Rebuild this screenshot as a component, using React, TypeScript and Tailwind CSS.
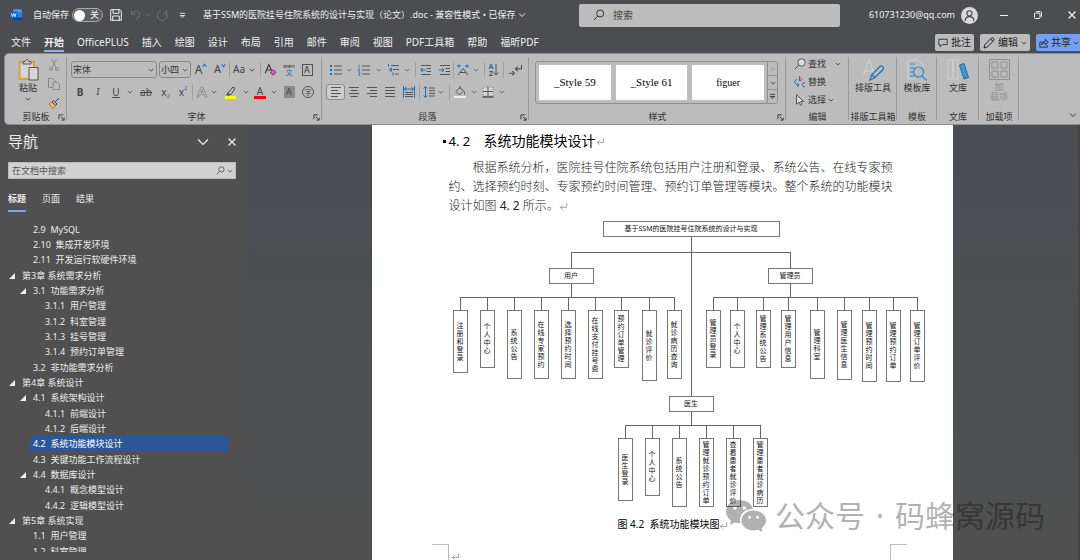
import type { ReactNode } from "react";

type IconProps = { children: ReactNode; className?: string; box?: string };

function Icon({ children, className = "size-3", box = "0 0 12 12" }: IconProps) {
  return (
    <svg viewBox={box} className={`shrink-0 ${className}`} fill="none" stroke="currentColor" strokeWidth="1" aria-hidden="true">
      {children}
    </svg>
  );
}

function Chevron({ className = "size-[6px]" }: { className?: string }) {
  return (
    <Icon box="0 0 8 8" className={className}>
      <path d="M1 2.5 4 5.5 7 2.5" />
    </Icon>
  );
}

function Tool({ label, className = "w-[18px]", children }: { label: string; className?: string; children: ReactNode }) {
  return (
    <button type="button" aria-label={label} className={`flex h-4 shrink-0 items-center justify-center ${className}`}>
      {children}
    </button>
  );
}

function Drop({ label, className = "w-2" }: { label: string; className?: string }) {
  return (
    <Tool label={label} className={className}>
      <Chevron />
    </Tool>
  );
}

function Divider({ className = "" }: { className?: string }) {
  return <span className={`h-4 w-px shrink-0 bg-[#a0a0a0] ${className}`} />;
}

function Launcher() {
  return (
    <button type="button" aria-label="更多选项" className="absolute right-[2px] bottom-[3px]">
      <Icon className="size-[7px]" box="0 0 8 8">
        <path d="M1 6V1h5M3 3l4 4M7 4v3H4" />
      </Icon>
    </button>
  );
}

function Group({ title, className, children, launcher }: { title: string; className: string; children: ReactNode; launcher?: boolean }) {
  return (
    <section aria-label={title} className={`relative flex shrink-0 flex-col ${className}`}>
      <div className="flex-1">{children}</div>
      <h2 className="h-[13px] text-center text-[9px] leading-3 whitespace-nowrap">{title}</h2>
      {launcher && <Launcher />}
      <span className="absolute top-[3px] right-0 bottom-1 w-px bg-[#999]" />
    </section>
  );
}

function BigTool({ label, icon, muted }: { label: string; icon: ReactNode; muted?: boolean }) {
  return (
    <button
      type="button"
      disabled={muted}
      className={`flex w-full flex-col items-center gap-[2px] pt-[5px] text-[9px] leading-[10px] whitespace-pre-line ${muted ? "text-[#909090]" : ""}`}
    >
      {icon}
      <span>{label}</span>
    </button>
  );
}

function TitleBar() {
  return (
    <div className="grid h-[30px] grid-cols-[579fr_261fr_240fr] items-center text-[9px] text-[#f0f0f0]">
      <div className="flex items-center pl-[10px] whitespace-nowrap">
        <svg viewBox="0 0 24 24" className="size-3" aria-label="Word">
          <rect x="6" y="1" width="18" height="22" rx="2" fill="#2b7cd3" />
          <rect x="6" y="1" width="18" height="6" rx="2" fill="#41a5ee" />
          <rect x="6" y="17" width="18" height="6" rx="1" fill="#103f91" />
          <rect y="5" width="15" height="14" rx="1.5" fill="#185abd" />
          <path d="M3 8.5 5 15.5 7.5 9 10 15.5 12 8.5" fill="none" stroke="#fff" strokeWidth="1.7" />
        </svg>
        <label htmlFor="autosave" className="ml-[11px] w-[36px]">自动保存</label>
        <span className="relative ml-[3px] flex h-[14px] w-[31px] items-center rounded-full border border-[#aaa] bg-[#5d5d5f]">
          <input id="autosave" type="checkbox" role="switch" className="absolute inset-0 appearance-none" />
          <span className="ml-px size-[11px] rounded-full bg-white" />
          <span className="ml-[5px]">关</span>
        </span>
        <button type="button" aria-label="保存" className="ml-[7px]">
          <Icon className="size-[12px]">
            <path d="M.7.7h9.3l1.3 1.3v9.3H.7zM3 .7v3.6h6V.7M2.7 11.3V7h6.6v4.3" />
          </Icon>
        </button>
        <button type="button" aria-label="撤消" className="ml-2 text-[#727477]">
          <Icon><path d="M1.5 1v4h4M1.7 4.8C4 1.5 9.5 1.5 9.8 5c0 2.5-2 3.5-4.5 6" /></Icon>
        </button>
        <span className="ml-[3px] text-[#727477]"><Chevron /></span>
        <button type="button" aria-label="重复" className="ml-[6px] text-[#727477]">
          <Icon><path d="M9.5 1v3.2H6.5M9.5 4A5 5 0 1 1 4 1.7" /></Icon>
        </button>
        <button type="button" aria-label="自定义快速访问工具栏" className="ml-[10px]">
          <Icon box="0 0 8 8" className="size-[7px]"><path d="M1 1.5h6M1.5 4 4 6.5 6.5 4z" /></Icon>
        </button>
        <h1 className="ml-[17px]">基于SSM的医院挂号住院系统的设计与实现（论文）.doc - 兼容性模式 • 已保存</h1>
        <span className="ml-[3px]"><Chevron className="size-2" /></span>
      </div>
      <label className="flex h-[23px] items-center rounded-[2px] bg-[#bcbcbc] pl-[14px] text-[#333]">
        <Icon className="size-[12px]"><circle cx="7.2" cy="4.5" r="3.5" /><path d="M4.7 7.2 1 11" /></Icon>
        <input aria-label="搜索" placeholder="搜索" className="ml-2 w-full bg-transparent text-[10px] placeholder:text-[#444] focus:outline-none" />
      </label>
      <div className="flex items-center justify-end pr-1">
        <span className="whitespace-nowrap">610731230@qq.com</span>
        <span className="ml-[6px] flex size-[17px] items-center justify-center rounded-full bg-[#d8d8d8] text-[#444]">
          <Icon className="size-[13px]"><circle cx="6" cy="4" r="2.4" /><path d="M2 11c0-5.3 8-5.3 8 0" /></Icon>
        </span>
        <button type="button" aria-label="最小化" className="ml-[22px]">
          <Icon className="size-2" box="0 0 8 8"><path d="M0 4.5h8" /></Icon>
        </button>
        <button type="button" aria-label="还原" className="ml-[26px]">
          <Icon className="size-2" box="0 0 8 8"><rect x=".5" y="2" width="5.5" height="5.5" rx="1" /><path d="M2.2.6H6c1 0 1.5.5 1.5 1.5v3.7" /></Icon>
        </button>
        <button type="button" aria-label="关闭" className="ml-[26px]">
          <Icon className="size-2" box="0 0 8 8"><path d="m.5.5 7 7m0-7-7 7" strokeWidth="1.2" /></Icon>
        </button>
      </div>
    </div>
  );
}

const tabs = ["文件", "开始", "OfficePLUS", "插入", "绘图", "设计", "布局", "引用", "邮件", "审阅", "视图", "PDF工具箱", "帮助", "福昕PDF"];

function TabBar() {
  return (
    <div className="flex h-[23px] items-start justify-between text-[10px] text-[#f0f0f0]">
      <nav aria-label="功能区" className="flex gap-x-[13px] pt-[5px] pl-[11px] leading-[14px] whitespace-nowrap">
        {tabs.map((t) =>
          t === "开始" ? (
            <a key={t} href="#home" aria-current="page" className="h-[17px] border-b-2 border-[#8fb0ea] font-bold">{t}</a>
          ) : (
            <a key={t} href="#tab">{t}</a>
          ),
        )}
      </nav>
      <div className="flex gap-[6px] pt-1 text-[#222]">
        <button type="button" className="flex h-[17px] items-center gap-[3px] rounded-[2px] bg-[#bcbcbc] px-[3px] whitespace-nowrap">
          <Icon className="size-[10px]"><path d="M1 1.5h10v6.5H5l-2.5 2.5V8H1z" /></Icon>批注
        </button>
        <button type="button" className="flex h-[17px] items-center gap-[3px] rounded-[2px] bg-[#bcbcbc] px-[3px] whitespace-nowrap">
          <Icon className="size-[12px]"><path d="m1 11 1-3.5L8.5 1c1-.8 3.2 1 2.3 2.3L4.5 10zM7.5 2l2.3 2.3" /></Icon>编辑<Chevron />
        </button>
        <button type="button" className="flex h-[17px] items-center gap-[2px] rounded-l-[2px] bg-[#73a0f4] pr-px pl-[3px] whitespace-nowrap">
          <Icon className="size-[10px]"><path d="M4 5H1v6h9V8.5M3.5 8c0-3 2-4 4-4V1.5L11 5 7.5 8V6c-2 0-3 .5-4 2z" /></Icon>共享<Chevron />
        </button>
      </div>
    </div>
  );
}

function Combo({ label, value, className }: { label: string; value: string; className: string }) {
  return (
    <span className={`relative flex h-[17px] shrink-0 items-center rounded-[3px] border border-[#888] ${className}`}>
      <select aria-label={label} className="h-full w-full appearance-none bg-transparent pl-px text-[9px]">
        <option>{value}</option>
      </select>
      <span className="pointer-events-none absolute right-[2px]"><Chevron /></span>
    </span>
  );
}

function FontGroup() {
  return (
    <Group title="字体" className="w-[255px] pl-1" launcher>
      <div className="flex items-center pt-[7px]">
        <Combo label="字体" value="宋体" className="w-[86px]" />
        <Combo label="字号" value="小四" className="ml-[2px] w-[32px]" />
        <Tool label="增大字号" className="w-5 text-[12px] text-[#444]">A<span className="-mt-2 text-[#1f6fb5]"><Icon box="0 0 8 8" className="size-[5px] rotate-180"><path d="M1 2 4 6 7 2" strokeWidth="1.8" /></Icon></span></Tool>
        <Tool label="减小字号" className="w-[18px] text-[11px] text-[#444]">A<span className="-mt-2 text-[#1f6fb5]"><Icon box="0 0 8 8" className="size-[5px]"><path d="M1 2 4 6 7 2" strokeWidth="1.8" /></Icon></span></Tool>
        <Divider />
        <Tool label="更改大小写" className="w-[18px] text-[10px] text-[#444]">Aa</Tool>
        <Drop label="大小写选项" />
        <Divider className="ml-1" />
        <Tool label="清除格式">
          <Icon className="size-[13px]"><path d="M1 9.5 4.5 1.5 7 7M2.3 6.5h4" /><path d="m6 8.7 2.5-2.5 2.5 2.3L8.5 11z" fill="#c87ab5" stroke="#a5338c" /></Icon>
        </Tool>
        <Tool label="拼音指南" className="w-5">
          <span className="flex flex-col items-center text-[6px] leading-[6px]"><span>wén</span><span className="text-[7px] leading-[7px] text-[#1f6fb5]">文</span></span>
        </Tool>
        <Tool label="字符边框" className="w-4"><span className="flex h-3 w-[11px] items-center justify-center border border-[#555] text-[9px] leading-none">A</span></Tool>
      </div>
      <div className="flex items-center pt-[6px] text-[10px] text-[#444]">
        <Tool label="加粗"><b>B</b></Tool>
        <Tool label="倾斜"><i className="font-serif">I</i></Tool>
        <Tool label="下划线"><u>U</u></Tool>
        <Drop label="下划线选项" className="w-[10px]" />
        <Tool label="删除线" className="w-[22px]"><s>ab</s></Tool>
        <Tool label="下标" className="w-[17px]">x<span className="mt-2 text-[6px] text-[#1f6fb5]">2</span></Tool>
        <Tool label="上标">x<span className="-mt-2 text-[6px] text-[#1f6fb5]">2</span></Tool>
        <Divider />
        <Tool label="文本效果" className="w-[17px] text-[#929292]">
          <Icon><path d="M1 11 5 1h2l4 10H9L8 8.5H4L3 11zM4.8 6.5h2.4L6 3.3z" /></Icon>
        </Tool>
        <Drop label="文本效果选项" />
        <Tool label="突出显示" className="w-6">
          <Icon className="size-[13px]" box="0 0 13 13"><path d="m4 7 5-6 2 1.5L7 8.5H4zM4 7 2.5 9H6" /><path d="M1 11.5h11" stroke="#ffff00" strokeWidth="3" /></Icon>
        </Tool>
        <Drop label="突出显示选项" />
        <Tool label="字体颜色" className="w-5"><span className="h-[13px] w-[12px] border-b-[3px] border-[#ff0000] text-center leading-[10px]">A</span></Tool>
        <Drop label="字体颜色选项" />
        <Tool label="字符底纹" className="w-[22px]"><span className="h-3 w-[11px] bg-[#8b8b8b] text-center text-[9px] leading-3">A</span></Tool>
        <Tool label="带圈字符" className="w-4"><span className="flex size-3 items-center justify-center rounded-full border border-[#555] text-[7px] leading-none">字</span></Tool>
      </div>
    </Group>
  );
}

function ParagraphGroup() {
  return (
    <Group title="段落" className="w-[207px] pl-1" launcher>
      <div className="flex items-center pt-2 text-[#555]">
        <Tool label="项目符号" className="w-[19px]">
          <Icon><path d="M4 2h8M4 6h8M4 10h8" /><path d="M0 2h2M0 6h2M0 10h2" stroke="#1f6fb5" strokeWidth="2" /></Icon>
        </Tool>
        <Drop label="项目符号选项" />
        <Tool label="编号" className="w-[22px]">
          <Icon><path d="M4 2h8M4 6h8M4 10h8" /><path d="M1 .5v3M.3 4.8h1.5L.3 7.2h1.5M.2 8.7h1.5v2.6H.2" stroke="#1f6fb5" strokeWidth=".8" /></Icon>
        </Tool>
        <Drop label="编号选项" />
        <Tool label="多级列表" className="w-5">
          <Icon><path d="M4 1.5h8M6 5.5h6M8 10h4" /><path d="M1.5 0v3M3 4.5h1.5V7H3zM6 8.5v3" stroke="#1f6fb5" /></Icon>
        </Tool>
        <Drop label="多级列表选项" />
        <Divider className="ml-1" />
        <Tool label="减少缩进" className="w-5">
          <Icon><path d="M1 1.5h10M6.5 4.5H11M6.5 7.5H11M1 10.5h10" /><path d="M5.5 6H.8M2.7 4 .7 6l2 2" stroke="#1f6fb5" /></Icon>
        </Tool>
        <Tool label="增加缩进" className="w-[17px]">
          <Icon><path d="M1 1.5h10M6.5 4.5H11M6.5 7.5H11M1 10.5h10" /><path d="M0 6h5M3 4l2 2-2 2" stroke="#1f6fb5" /></Icon>
        </Tool>
        <Divider />
        <Tool label="中文版式">
          <Icon><path d="M1 11 6 4.5 11 11M3 8.5h6" /><path d="M0 2h4M8 2h4M2 .5v3M10 .5v3" stroke="#1f6fb5" /></Icon>
        </Tool>
        <Drop label="中文版式选项" />
        <Divider className="ml-1" />
        <Tool label="排序">
          <span className="flex flex-col text-[7px] leading-[7px] font-bold"><span className="text-[#1f6fb5]">A</span><span>Z</span></span>
          <Icon className="h-3 w-[6px]" box="0 0 6 12"><path d="M3 0v11M.5 8.5 3 11l2.5-2.5" /></Icon>
        </Tool>
        <Divider />
        <Tool label="显示编辑标记" className="w-[22px]">
          <Icon className="size-[13px]"><path d="M11.5 1v3.5H6M8 2.5l-2 2 2 2M0 8.5h5M3 6.5l2 2-2 2" /></Icon>
        </Tool>
      </div>
      <div className="flex items-center pt-[6px] text-[#555]">
        <Tool label="左对齐" className="w-[19px] rounded-[3px] border border-[#8a8a8a] bg-[#cdcdcd]"><Icon><path d="M1 1.5h10M1 4.5h7M1 7.5h10M1 10.5h7" /></Icon></Tool>
        <Tool label="居中"><Icon><path d="M1 1.5h10M2.5 4.5h7M1 7.5h10M2.5 10.5h7" /></Icon></Tool>
        <Tool label="右对齐"><Icon><path d="M1 1.5h10M4 4.5h7M1 7.5h10M4 10.5h7" /></Icon></Tool>
        <Tool label="两端对齐"><Icon><path d="M1 1.5h10M1 4.5h10M1 7.5h10M1 10.5h10" /></Icon></Tool>
        <Tool label="分散对齐" className="w-5">
          <Icon><path d="M2 6.5h8M2 8.5h8M2 10.5h8" /><path d="M.5 0v12M11.5 0v12M1 3h10M3.5 1 1.5 3l2 2M8.5 1l2 2-2 2" stroke="#1f6fb5" /></Icon>
        </Tool>
        <Divider />
        <Tool label="行距" className="w-[17px]">
          <Icon><path d="M6 2h6M6 4.7h6M6 7.4h6M6 10h6" /><path d="M2.5.7v10.6M.7 2.5l1.8-2 1.8 2M.7 9.5l1.8 2 1.8-2" stroke="#1f6fb5" /></Icon>
        </Tool>
        <Drop label="行距选项" />
        <Divider className="ml-1" />
        <Tool label="底纹" className="w-5">
          <Icon><path d="m2 5.5 4-4 3.5 3.5-4 4zM6 .2v3M10.5 5.5v3" /><path d="M0 11h12" stroke="#eee" strokeWidth="2" /></Icon>
        </Tool>
        <Drop label="底纹选项" />
        <Tool label="边框" className="w-5">
          <Icon><rect x="1" y="1" width="10" height="9" fill="#d8d8d8" stroke="#888" strokeDasharray="1 1" /><path d="M6 1v9M1 5.5h10" /><path d="M.5 11h11" strokeWidth="1.5" /></Icon>
        </Tool>
        <Drop label="边框选项" />
      </div>
    </Group>
  );
}

function Ribbon() {
  return (
    <div className="ml-1 flex h-[72px] overflow-hidden rounded-l-[5px] border-y border-l border-[#8d8d8d] bg-[#bcbcbc] text-[#333]">
      <Group title="剪贴板" className="w-[62px]" launcher>
        <div className="flex pl-[9px]">
          <button type="button" className="flex w-[28px] flex-col items-center pt-[5px] text-[9px] leading-[11px]">
            <Icon className="h-[22px] w-[21px]" box="0 0 21 22">
              <path d="M4 3H1.5v17H16V3h-2.5" stroke="#d9a33c" strokeWidth="2" fill="#d5d5d5" />
              <path d="M5 5V2.5h2C7.5 0 10.5 0 11 2.5h2V5z" fill="#c9c9c9" stroke="#555" />
              <path d="M11 8.5h9V21h-9z" fill="#d6d6d6" stroke="#555" />
            </Icon>
            <span className="mt-px mb-[3px]">粘贴</span>
            <Chevron />
          </button>
          <div className="flex flex-col gap-[3px] pt-[3px] pl-[5px] text-[#888]">
            <Tool label="剪切" className="w-[14px]"><Icon><path d="m3.5 0 4.5 8.5M8.5 0 4 8.5" /><circle cx="3" cy="10" r="1.5" /><circle cx="9" cy="10" r="1.5" /></Icon></Tool>
            <Tool label="复制" className="w-[14px]"><Icon><path d="M4 9.5H.5V.5h4L7 3v1M5 4h4l2.5 2.5v5H5z" /></Icon></Tool>
            <Tool label="格式刷" className="w-[14px]">
              <Icon><path d="m1 7 3-2 3.5 3.5L5 11.5z" fill="#e8c070" stroke="#b47d1c" /><path d="m4 5 1.5-1.5 3.5 3.5L7.5 8.5zM7.5 4.5 11 1" stroke="#444" /></Icon>
            </Tool>
          </div>
        </div>
      </Group>
      <FontGroup />
      <ParagraphGroup />
      <Group title="样式" className="w-[257px]" launcher>
        <div className="mt-[7px] mr-[8px] ml-[6px] flex h-[43px] rounded-[3px] border border-[#8f8f8f]">
          <div className="flex flex-1 gap-[5px] py-[3px] pl-[3px] font-['Liberation_Serif','Noto_Sans_CJK_SC',serif] text-[11px] text-black">
            <button type="button" className="flex-1 bg-white">_Style 59</button>
            <button type="button" className="flex-1 bg-white">_Style 61</button>
            <button type="button" className="flex-1 bg-white text-[10px]">figuer</button>
          </div>
          <div className="ml-[3px] flex w-[10px] flex-col divide-y divide-[#8f8f8f] border-l border-[#8f8f8f]">
            <button type="button" aria-label="上一行" className="flex flex-1 items-center justify-center text-[#888]"><Chevron className="size-[6px] rotate-180" /></button>
            <button type="button" aria-label="下一行" className="flex flex-1 items-center justify-center"><Chevron /></button>
            <button type="button" aria-label="更多样式" className="flex flex-1 items-center justify-center"><Icon box="0 0 8 8" className="size-[7px]"><path d="M1 1.5h6M1.5 4 4 6.5 6.5 4z" /></Icon></button>
          </div>
        </div>
      </Group>
      <Group title="编辑" className="w-[63px]">
        <div className="flex flex-col gap-[2px] pt-[2px] pl-2 text-[9px]">
          <button type="button" className="flex h-4 items-center gap-[2px]">
            <Icon className="size-3 text-[#555]"><circle cx="7.5" cy="4.5" r="3.7" fill="#ddd" /><path d="M4.8 7.2.8 11.2" /></Icon>查找<span className="ml-[7px]"><Chevron /></span>
          </button>
          <button type="button" className="flex h-4 items-center gap-[2px]">
            <Icon><path d="M5.5 0v5M5.5 2.2c3-.8 3 3 0 2.5" stroke="#b0308f" /><path d="M3 3.5C0 4 0 9 4.5 9M3 7.5 5 9l-2 1.8M11 7c-3.5-1.5-3.5 5 0 3.5" stroke="#1f6fb5" /></Icon>替换
          </button>
          <button type="button" className="flex h-4 items-center gap-[2px]">
            <Icon className="size-3 text-[#555]"><path d="M2.5.7v9.5L5 8l1.5 3.3L8 10.6 6.6 7.5h3z" fill="#ddd" /></Icon>选择<Chevron />
          </button>
        </div>
      </Group>
      <Group title="排版工具箱" className="w-[48px]">
        <BigTool
          label="排版工具"
          icon={<Icon className="size-[22px]" box="0 0 22 22"><path d="M1 17 7 1l5 13M3 12h7" stroke="#d4d4d4" /><path d="m8 21 1.5-5L18 7.5c1.5-1.5 4.5 1 3 3L12.5 19zM10 16l2.5 2.5" stroke="#1f6fb5" strokeWidth="1.2" /></Icon>}
        />
      </Group>
      <Group title="模板" className="w-10">
        <BigTool
          label="模板库"
          icon={<Icon className="size-[22px]" box="0 0 22 22"><path d="M9 20H2V1h10l5 5v1" stroke="#d4d4d4" /><path d="M4 5h5M4 9h4M4 13h3M4 17h4M16 17l4.5 4.5" stroke="#1f8fd0" strokeWidth="1.2" /><circle cx="12.5" cy="13" r="5" stroke="#1f8fd0" strokeWidth="1.2" /></Icon>}
        />
      </Group>
      <Group title="文库" className="w-[42px]">
        <BigTool
          label="文库"
          icon={<Icon className="size-[22px]" box="0 0 22 22"><path d="M1 1h5v19H1zM6 1h5v19H6z" stroke="#d0d0d0" /><path d="m12.5 6 4.5-1.5 4.5 14-4.5 1.5z" fill="#4595d1" stroke="#1c6cad" /></Icon>}
        />
      </Group>
      <Group title="加载项" className="w-10">
        <BigTool
          muted
          label={"加\n载项"}
          icon={<Icon className="size-[21px]" box="0 0 21 21"><path d="M.5.5h20v20H.5zM3 3h6v6H3zM12 3h6v6h-6zM3 12h6v6H3zM12 12h6v6h-6z" /></Icon>}
        />
      </Group>
      <div className="flex flex-1 items-end justify-end pr-[3px] pb-[5px]">
        <button type="button" aria-label="折叠功能区"><Chevron className="size-2" /></button>
      </div>
    </div>
  );
}

type TreeItem = { level: 0 | 1 | 2; text: string; open?: boolean; current?: boolean };

const outline: TreeItem[] = [
  { level: 1, text: "2.9  MySQL" },
  { level: 1, text: "2.10  集成开发环境" },
  { level: 1, text: "2.11  开发运行软硬件环境" },
  { level: 0, text: "第3章 系统需求分析", open: true },
  { level: 1, text: "3.1  功能需求分析", open: true },
  { level: 2, text: "3.1.1  用户管理" },
  { level: 2, text: "3.1.2  科室管理" },
  { level: 2, text: "3.1.3  挂号管理" },
  { level: 2, text: "3.1.4  预约订单管理" },
  { level: 1, text: "3.2  非功能需求分析" },
  { level: 0, text: "第4章 系统设计", open: true },
  { level: 1, text: "4.1  系统架构设计", open: true },
  { level: 2, text: "4.1.1  前端设计" },
  { level: 2, text: "4.1.2  后端设计" },
  { level: 1, text: "4.2  系统功能模块设计", current: true },
  { level: 1, text: "4.3  关键功能工作流程设计" },
  { level: 1, text: "4.4  数据库设计", open: true },
  { level: 2, text: "4.4.1  概念模型设计" },
  { level: 2, text: "4.4.2  逻辑模型设计" },
  { level: 0, text: "第5章 系统实现", open: true },
  { level: 1, text: "1.1  用户管理" },
  { level: 1, text: "1.2  科室管理" },
];

const indents = ["pl-[9px]", "pl-[20px]", "pl-[32px]"];

function NavPane() {
  return (
    <aside className="flex w-[248px] shrink-0 flex-col bg-[#505050] pb-2 text-[9px] text-[#ececec]">
      <div className="flex h-[37px] items-center pr-3 pb-1 pl-2">
        <h2 className="flex-1 text-[15px]">导航</h2>
        <button type="button" aria-label="导航选项">
          <Icon className="size-3"><path d="M1 3.5 6 8.5 11 3.5" strokeWidth="1.2" /></Icon>
        </button>
        <button type="button" aria-label="关闭导航" className="ml-[19px]">
          <Icon className="size-2" box="0 0 8 8"><path d="m.5.5 7 7m0-7-7 7" strokeWidth="1.2" /></Icon>
        </button>
      </div>
      <label className="mr-3 ml-2 flex h-[17px] items-center border border-[#bbb] bg-[#d2d2d2] pr-[2px] pl-[3px] text-[#444]">
        <input aria-label="在文档中搜索" placeholder="在文档中搜索" className="w-full flex-1 bg-transparent placeholder:text-[#555] focus:outline-none" />
        <Icon className="size-[9px]"><circle cx="7.2" cy="4.5" r="3.5" /><path d="M4.7 7.2 1 11" /></Icon>
        <span className="ml-[2px]"><Chevron /></span>
      </label>
      <div role="tablist" className="flex h-[43px] gap-4 pt-[13px] pl-2 leading-[14px]">
        <button type="button" role="tab" aria-selected="true" className="h-5 border-b-2 border-[#7da3ea] pb-1 font-bold">标题</button>
        <button type="button" role="tab" aria-selected="false" className="h-[14px]">页面</button>
        <button type="button" role="tab" aria-selected="false" className="h-[14px]">结果</button>
      </div>
      <ul className="min-h-0 flex-1 overflow-hidden pr-5">
        {outline.map((item) => (
          <li key={item.text} className={`flex h-[15px] items-center nth-[3n]:h-4 ${indents[item.level]}`}>
            <span className="w-[10px] shrink-0">
              {item.open && <svg viewBox="0 0 6 6" className="size-[6px]" aria-hidden="true"><path d="M6 0v6H0z" fill="#f0f0f0" /></svg>}
            </span>
            <a href="#section" className={`h-full flex-1 pl-[3px] leading-[15px] whitespace-pre ${item.current ? "bg-[#2b579a] text-white" : ""}`}>{item.text}</a>
          </li>
        ))}
      </ul>
    </aside>
  );
}

type Leaf = { x: number; h: number; text: string };

const userLeaves: Leaf[] = [
  { x: 11, h: 63, text: "注册和登录" },
  { x: 38, h: 58, text: "个人中心" },
  { x: 65, h: 69, text: "系统公告" },
  { x: 92, h: 69, text: "在线专家预约" },
  { x: 119, h: 69, text: "选择预约时间" },
  { x: 146, h: 69, text: "在线支付挂号费" },
  { x: 172, h: 58, text: "预约订单管理" },
  { x: 200, h: 71, text: "就诊评价" },
  { x: 225, h: 69, text: "就诊病历查询" },
];
const adminLeaves: Leaf[] = [
  { x: 264, h: 58, text: "管理员登录" },
  { x: 288, h: 58, text: "个人中心" },
  { x: 314, h: 58, text: "管理系统公告" },
  { x: 339, h: 58, text: "管理用户信息" },
  { x: 368, h: 69, text: "管理科室" },
  { x: 395, h: 70, text: "管理医生信息" },
  { x: 420, h: 72, text: "管理预约时间" },
  { x: 444, h: 72, text: "管理预约订单" },
  { x: 468, h: 72, text: "管理订单评价" },
];
const doctorLeaves: Leaf[] = [
  { x: 176, h: 63, text: "医生登录" },
  { x: 203, h: 58, text: "个人中心" },
  { x: 230, h: 69, text: "系统公告" },
  { x: 257, h: 69, text: "管理就诊预约订单" },
  { x: 284, h: 69, text: "查看患者就诊评价" },
  { x: 311, h: 69, text: "管理患者就诊病历" },
];

const branches = [
  { parent: 122, stem: 68, bus: 81, top: 94, leaves: userLeaves },
  { parent: 341, stem: 68, bus: 81, top: 94, leaves: adminLeaves },
  { parent: 242, stem: 196, bus: 209, top: 222, leaves: doctorLeaves },
];

function Diagram() {
  const heading = "absolute flex h-4 items-center justify-center border border-[#777] bg-white whitespace-nowrap";
  return (
    <div className="relative mt-px h-[295px] w-[480px] text-[7px] leading-2 text-[#111]">
      <svg viewBox="0 0 480 295" className="absolute inset-0 h-full w-full" fill="none" stroke="#666" shapeRendering="crispEdges" aria-hidden="true">
        <path d="M242.5 20V180M122.5 52V36.5H341.5V52" />
        {branches.map((b) => (
          <path
            key={b.parent}
            d={`M${b.parent + 0.5} ${b.stem - 1}V${b.bus}M${b.leaves[0].x} ${b.bus + 0.5}H${b.leaves[b.leaves.length - 1].x + 1}${b.leaves.map((l) => `M${l.x + 0.5} ${b.bus}V${b.top}`).join("")}`}
          />
        ))}
      </svg>
      <div className={`${heading} top-[5px] left-[154px] w-[177px]`}>基于SSM的医院挂号住院系统的设计与实现</div>
      <div className={`${heading} top-[52px] left-[100px] w-[45px]`}>用户</div>
      <div className={`${heading} top-[52px] left-[319px] w-[45px]`}>管理员</div>
      <div className={`${heading} top-[180px] left-[220px] w-[45px]`}>医生</div>
      {branches.map((b) =>
        b.leaves.map((l) => (
          <div
            key={`${b.parent}-${l.x}`}
            className="absolute flex w-[15px] items-center justify-center border border-[#777] bg-white"
            style={{ left: l.x - 7, top: b.top, height: l.h }}
          >
            <span className="w-[7px] break-all">{l.text}</span>
          </div>
        )),
      )}
    </div>
  );
}

function Return() {
  return (
    <svg viewBox="0 0 10 10" className="inline size-[9px]" fill="none" stroke="#999" aria-hidden="true">
      <path d="M8.5 1.5v4.5H1.5M4 3.5 1.5 6 4 8.5" />
    </svg>
  );
}

function Watermark() {
  return (
    <div className="pointer-events-none absolute right-[35px] bottom-[22px] flex items-center text-[30px] leading-[44px] text-black opacity-30">
      <svg viewBox="0 0 42 34" className="mr-2 h-[34px] w-[42px]" aria-hidden="true">
        <path
          fillRule="evenodd"
          fill="currentColor"
          d="M14.5 1C6.5 1 1 6 1 12.5c0 3.7 2 6.8 5 9L5 26l5-2.5c2 .6 4 .7 5.5.5C13.5 16.5 19 10 28 10 26.5 4.5 21 1 14.5 1zM10 7.2a1.8 1.8 0 1 0 0 3.6 1.8 1.8 0 0 0 0-3.6zm9.5 0a1.8 1.8 0 1 0 0 3.6 1.8 1.8 0 0 0 0-3.6z"
        />
        <path
          fillRule="evenodd"
          fill="currentColor"
          d="M28.5 11.5c-7 0-12 4.5-12 10S21.5 31.5 28.5 31.5c1.5 0 3-.2 4.5-.7l4.5 2.5-1-4c2.7-2 4.5-4.7 4.5-7.8 0-5.5-5.5-10-12.5-10zM24.5 16.7a1.5 1.5 0 1 0 0 3 1.5 1.5 0 0 0 0-3zm8 0a1.5 1.5 0 1 0 0 3 1.5 1.5 0 0 0 0-3z"
        />
      </svg>
      <span>公众号</span>
      <span className="w-[30px] text-center">·</span>
      <span>码蜂窝源码</span>
    </div>
  );
}

function Page() {
  return (
    <article className="w-full max-w-[581px] bg-white pl-[77px] text-black">
      <h2 className="relative flex items-center pt-[6px] text-[14px] leading-5 whitespace-nowrap">
        <span className="absolute -left-[6px] size-[3px] bg-black" />
        <span className="w-[35px] text-[13px]">4. 2</span>系统功能模块设计<Return />
      </h2>
      <p className="pt-[7px] text-[12px] leading-[19px] font-light whitespace-nowrap text-[#222]">
        <span className="block indent-6">根据系统分析，医院挂号住院系统包括用户注册和登录、系统公告、在线专家预</span>
        <span className="block">约、选择预约时刻、专家预约时间管理、预约订单管理等模块。整个系统的功能模块</span>
        <span className="block">设计如图 <span className="font-normal">4. 2</span> 所示。<Return /></span>
      </p>
      <Diagram />
      <p className="pt-[5px] pl-[169px] text-[10px] leading-4 whitespace-pre">图 4.2  系统功能模块图<Return /></p>
      <div className="mt-3 mr-[46px] -ml-[17px] flex justify-between">
        <span className="h-4 w-[17px] border-t border-r border-[#bbb]" />
        <span className="flex-1 pt-[3px] pl-[2px] leading-none"><Return /></span>
        <span className="h-4 w-[17px] border-t border-l border-[#bbb]" />
      </div>
    </article>
  );
}

export default function App() {
  return (
    <div className="flex h-screen flex-col overflow-hidden bg-[#4b4d51] font-['Noto_Sans','Noto_Sans_CJK_SC',sans-serif]">
      <header>
        <TitleBar />
        <TabBar />
        <Ribbon />
      </header>
      <div className="relative flex min-h-0 flex-1">
        <NavPane />
        <main className="flex flex-1 justify-center overflow-hidden border-r-2 border-[#444] bg-linear-to-b from-[#4a4e53] to-[#505050] pr-[2px]">
          <Page />
        </main>
        <Watermark />
      </div>
    </div>
  );
}
